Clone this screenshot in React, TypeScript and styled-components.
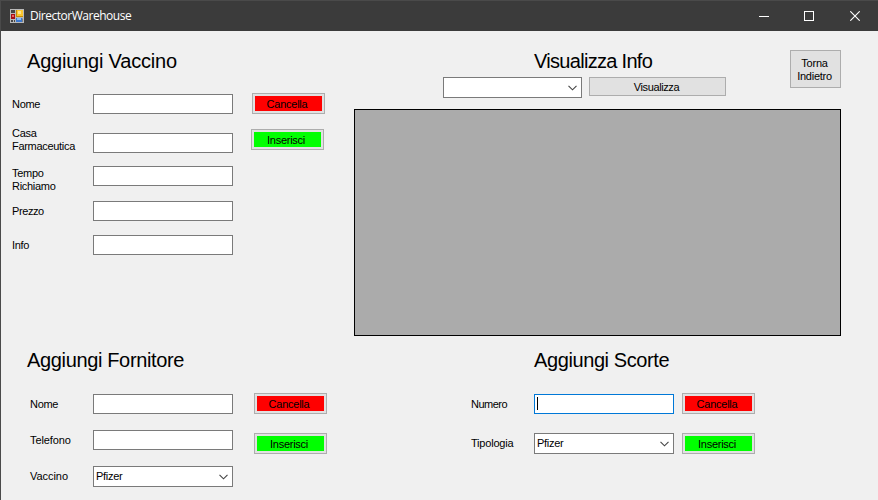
import React from "react";
import styled, { createGlobalStyle } from "styled-components";

const GlobalStyle = createGlobalStyle`
  *, *::before, *::after { box-sizing: border-box; }
  body {
    margin: 0;
    background: #f0f0f0;
    color: #000;
    font: 11px/13px "Liberation Sans", Arial, sans-serif;
    letter-spacing: -0.25px;
    overflow: hidden;
  }
`;

const Window = styled.div`
  display: flex;
  flex-direction: column;
  width: 878px;
  height: 500px;
  overflow: hidden;
  border-left: 1px solid #4a4a4a;
  background: #f0f0f0;
`;

const TitleBar = styled.header`
  display: flex;
  align-items: center;
  flex: none;
  height: 31px;
  padding: 0 0 0 9px;
  border-top: 1px solid #4a4a4a;
  background: #3b3b3b;
  color: #fff;
`;

const AppIcon = styled.svg`
  flex: none;
  width: 14px;
  height: 14px;
  margin-top: -1px;
`;

const Title = styled.span`
  flex: 1;
  margin-left: 6px;
  font: 12px/16px "Open Sans", "Noto Sans", sans-serif;
  letter-spacing: -0.48px;
`;

const WindowButton = styled.span<{ $w: number }>`
  display: flex;
  justify-content: center;
  width: ${(p) => p.$w}px;
  margin-top: -1px;
  svg { display: block; }
`;

const Client = styled.main`
  display: grid;
  grid-template-columns: 352px 488px;
  grid-template-rows: 305px 164px;
  padding-left: 1px;
`;

const Section = styled.section<{ $top: number }>`
  padding-top: ${(p) => p.$top}px;
`;

const Heading = styled.h2<{ $x: number; $ls: number }>`
  margin: 0;
  padding: 0 0 1px ${(p) => p.$x}px;
  font-size: 20px;
  font-weight: 400;
  line-height: 24px;
  letter-spacing: ${(p) => p.$ls}px;
  white-space: nowrap;
`;

const FormBody = styled.div`
  display: flex;
  align-items: flex-start;
`;

const Fields = styled.div<{ $w: number; $top: number }>`
  width: ${(p) => p.$w}px;
  padding-top: ${(p) => p.$top}px;
`;

const FieldRow = styled.div<{ $x: number; $label: number; $gap?: number; $h?: number }>`
  display: grid;
  grid-template-columns: ${(p) => p.$label}px 140px;
  align-items: start;
  height: ${(p) => p.$h ?? 20}px;
  margin-top: ${(p) => p.$gap ?? 0}px;
  padding-left: ${(p) => p.$x}px;
`;

const Label = styled.label<{ $drop?: number; $ls?: number }>`
  padding-top: ${(p) => p.$drop ?? 4}px;
  letter-spacing: ${(p) => p.$ls ?? -0.3}px;
  white-space: pre;
`;

const TextBox = styled.div<{ $drop?: number; $focus?: boolean }>`
  display: flex;
  align-items: center;
  height: 20px;
  margin-top: ${(p) => p.$drop ?? 0}px;
  padding-left: 2px;
  border: 1px solid ${(p) => (p.$focus ? "#0078d7" : "#7a7a7a")};
  background: #fff;
`;

const Caret = styled.span`
  width: 1px;
  height: 13px;
  margin-top: -1px;
  background: #000;
`;

const Combo = styled.div<{ $w?: number }>`
  display: flex;
  align-items: center;
  justify-content: space-between;
  width: ${(p) => p.$w ?? 140}px;
  height: 21px;
  padding: 0 4px 0 2px;
  border: 1px solid #7a7a7a;
  background: #fff;
  svg { display: block; }
`;

const ComboText = styled.span`
  letter-spacing: -0.3px;
`;

const Actions = styled.div<{ $top: number; $gap: number }>`
  display: flex;
  flex-direction: column;
  gap: ${(p) => p.$gap}px;
  padding-top: ${(p) => p.$top}px;
`;

const ActionButton = styled.button<{ $fill: string; $shift?: number }>`
  width: 73px;
  height: 21px;
  margin: 0 0 0 ${(p) => p.$shift ?? 0}px;
  padding: 1px 3px 0 0;
  border: 1px solid #adadad;
  background: ${(p) => p.$fill};
  box-shadow: inset 0 0 0 2px #e1e1e1;
  color: #000;
  font: inherit;
  letter-spacing: inherit;
  line-height: 18px;
`;

const PlainButton = styled.button<{ $w: number; $h: number; $ls?: number }>`
  width: ${(p) => p.$w}px;
  height: ${(p) => p.$h}px;
  padding: 2px 2px 0 0;
  border: 1px solid #adadad;
  background: #e1e1e1;
  color: #000;
  font: inherit;
  letter-spacing: ${(p) => p.$ls ?? -0.4}px;
  white-space: pre;
`;

const InfoTop = styled.div`
  display: flex;
  justify-content: space-between;
  align-items: flex-start;
  height: 78px;
`;

const InfoControls = styled.div`
  display: flex;
  align-items: flex-start;
  gap: 7px;
  margin-top: 3px;
  padding-left: 89px;
`;

const BackSlot = styled.div`
  margin: 19px 1px 0 0;
`;

const DataGrid = styled.div`
  width: 487px;
  height: 227px;
  border: 1px solid #000;
  background: #ababab;
`;

const Chevron = () => (
  <svg width="9" height="6" viewBox="0 0 9 6" fill="none" stroke="#444" strokeWidth="1.1">
    <path d="M.5 .8 4.5 4.8 8.5 .8" />
  </svg>
);

const FormIcon = () => (
  <AppIcon viewBox="0 0 14 14">
    <rect width="14" height="14" fill="#b9b9b9" />
    <path d="M1 1h4v3H1zM1 11h2v2H1zM4 11h1v2H4zM12.5 9.5H13V13h-.5z" fill="#454545" />
    <rect x="1" y="5" width="4" height="5" fill="#a50f18" />
    <rect x="2" y="6" width="2" height="2" fill="#ee6260" />
    <rect x="6" y="1" width="7" height="7" fill="#c48b08" />
    <rect x="7" y="1" width="6" height="6" fill="#fbc62e" />
    <rect x="8" y="2" width="3" height="3" fill="#ffe58c" />
    <rect x="6" y="9" width="6" height="4" fill="#3c78cf" />
    <rect x="7" y="9" width="4" height="2" fill="#8bbcf5" />
  </AppIcon>
);

export default function App() {
  return (
    <>
      <GlobalStyle />
      <Window>
        <TitleBar>
          <FormIcon />
          <Title>DirectorWarehouse</Title>
          <WindowButton $w={46}>
            <svg width="10" height="10" shapeRendering="crispEdges"><path d="M0 5.5h10" stroke="#fff" /></svg>
          </WindowButton>
          <WindowButton $w={44}>
            <svg width="10" height="10"><rect x=".5" y=".5" width="9" height="9" fill="none" stroke="#fff" /></svg>
          </WindowButton>
          <WindowButton $w={47}>
            <svg width="10" height="10"><path d="M.3.3l9.4 9.4M9.7.3.3 9.7" stroke="#fff" strokeWidth="1.1" /></svg>
          </WindowButton>
        </TitleBar>
        <Client>
          <Section $top={18}>
            <Heading $x={25} $ls={-0.2}>Aggiungi Vaccino</Heading>
            <FormBody>
              <Fields $w={249} $top={20}>
                <FieldRow $x={10} $label={81}>
                  <Label>Nome</Label>
                  <TextBox />
                </FieldRow>
                <FieldRow $x={10} $label={81} $gap={13} $h={26}>
                  <Label $drop={0}>{"Casa\nFarmaceutica"}</Label>
                  <TextBox $drop={6} />
                </FieldRow>
                <FieldRow $x={10} $label={81} $gap={13} $h={27}>
                  <Label $drop={1}>{"Tempo\nRichiamo"}</Label>
                  <TextBox />
                </FieldRow>
                <FieldRow $x={10} $label={81} $gap={8}>
                  <Label $ls={-0.4}>Prezzo</Label>
                  <TextBox />
                </FieldRow>
                <FieldRow $x={10} $label={81} $gap={14}>
                  <Label>Info</Label>
                  <TextBox />
                </FieldRow>
              </Fields>
              <Actions $top={19} $gap={15}>
                <ActionButton $fill="#f00" $shift={1}>Cancella</ActionButton>
                <ActionButton $fill="#0f0">Inserisci</ActionButton>
              </Actions>
            </FormBody>
          </Section>

          <Section $top={0}>
            <InfoTop>
              <div>
                <Section $top={18}>
                  <Heading $x={180} $ls={-0.7}>Visualizza Info</Heading>
                </Section>
                <InfoControls>
                  <Combo $w={139}><span /><Chevron /></Combo>
                  <PlainButton $w={137} $h={19}>Visualizza</PlainButton>
                </InfoControls>
              </div>
              <BackSlot>
                <PlainButton $w={51} $h={38} $ls={-0.25}>{"Torna\nIndietro"}</PlainButton>
              </BackSlot>
            </InfoTop>
            <DataGrid />
          </Section>

          <Section $top={12}>
            <Heading $x={25} $ls={-0.35}>Aggiungi Fornitore</Heading>
            <FormBody>
              <Fields $w={252} $top={21}>
                <FieldRow $x={28} $label={63}>
                  <Label>Nome</Label>
                  <TextBox />
                </FieldRow>
                <FieldRow $x={28} $label={63} $gap={16}>
                  <Label $ls={-0.1}>Telefono</Label>
                  <TextBox />
                </FieldRow>
                <FieldRow $x={28} $label={63} $gap={16}>
                  <Label $ls={-0.05}>Vaccino</Label>
                  <Combo><ComboText>Pfizer</ComboText><Chevron /></Combo>
                </FieldRow>
              </Fields>
              <Actions $top={20} $gap={19}>
                <ActionButton $fill="#f00">Cancella</ActionButton>
                <ActionButton $fill="#0f0">Inserisci</ActionButton>
              </Actions>
            </FormBody>
          </Section>

          <Section $top={12}>
            <Heading $x={180} $ls={-0.4}>Aggiungi Scorte</Heading>
            <FormBody>
              <Fields $w={328} $top={21}>
                <FieldRow $x={117} $label={63}>
                  <Label $ls={-0.5}>Numero</Label>
                  <TextBox $focus><Caret /></TextBox>
                </FieldRow>
                <FieldRow $x={117} $label={63} $gap={19}>
                  <Label $ls={-0.2}>Tipologia</Label>
                  <Combo><ComboText>Pfizer</ComboText><Chevron /></Combo>
                </FieldRow>
              </Fields>
              <Actions $top={20} $gap={19}>
                <ActionButton $fill="#f00">Cancella</ActionButton>
                <ActionButton $fill="#0f0">Inserisci</ActionButton>
              </Actions>
            </FormBody>
          </Section>
        </Client>
      </Window>
    </>
  );
}
